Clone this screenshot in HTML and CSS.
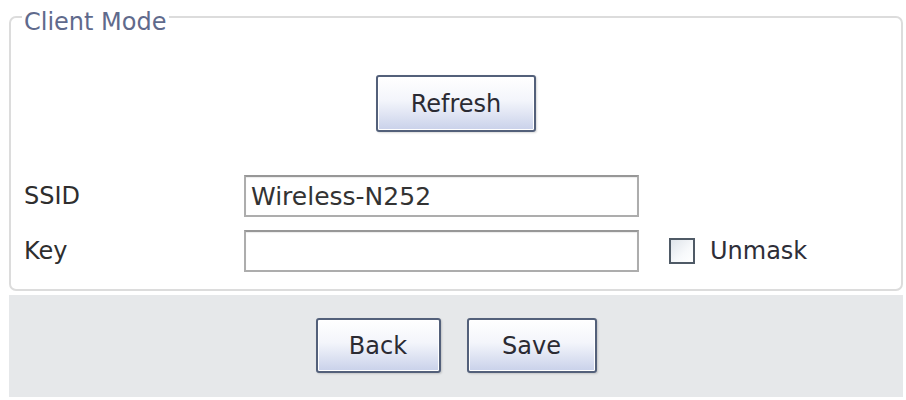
FILE: index.html
```html
<!DOCTYPE html>
<html>
<head>
<meta charset="utf-8">
<link rel="stylesheet" href="styles.css">
</head>
<body>
<div class="page">
  <fieldset class="panel">
    <legend class="panel-title">Client Mode</legend>
    <div class="refresh-row">
      <button class="btn btn-refresh" type="button">Refresh</button>
    </div>
    <div class="form-row">
      <label class="field-label">SSID</label>
      <input class="field-input" type="text" value="Wireless-N252">
      <span></span>
    </div>
    <div class="form-row">
      <label class="field-label">Key</label>
      <input class="field-input" type="password" value="">
      <label class="unmask"><span class="check"></span><span class="unmask-text">Unmask</span></label>
    </div>
  </fieldset>
  <div class="footer">
    <button class="btn btn-back" type="button">Back</button>
    <button class="btn btn-save" type="button">Save</button>
  </div>
</div>
</body>
</html>
```
FILE: styles.css
```css
html, body {
  margin: 0;
  padding: 0;
  background: #ffffff;
}
body {
  font-family: "DejaVu Sans", Verdana, sans-serif;
  color: #2e2e2e;
}
.page {
  padding: 0 3px 0 9px;
}
.panel {
  margin: 0;
  border: 2px solid #dcdcdc;
  border-radius: 7px;
  padding: 41px 13px 17px 13px;
  min-width: 0;
}
.panel-title {
  font-size: 24px;
  line-height: 24px;
  color: #5f6a8c;
  padding: 10px 2px 0 2px;
  margin-left: -2px;
}
.refresh-row {
  display: flex;
  justify-content: center;
  margin-bottom: 43px;
}
.btn {
  font-family: "DejaVu Sans", Verdana, sans-serif;
  font-size: 24px;
  color: #2b2b33;
  border: 2px solid #53607a;
  border-radius: 3px;
  background: linear-gradient(to bottom, #ffffff 0%, #f3f5fb 45%, #c9d1ea 100%);
  box-shadow: inset 0 0 0 1px #ffffff, 1px 1px 2px rgba(0,0,0,0.15);
  padding: 0;
  margin: 0;
}
.btn-refresh {
  width: 160px;
  height: 57px;
}
.form-row {
  display: grid;
  grid-template-columns: 220px 395px auto;
  align-items: center;
  margin-top: 13px;
}
.form-row:first-of-type {
  margin-top: 0;
}
.field-label {
  font-size: 24px;
  color: #2e2e2e;
}
.field-input {
  box-sizing: border-box;
  width: 395px;
  height: 42px;
  border: 2px solid #adadad;
  border-top-color: #979797;
  box-shadow: inset 0 1px 1px rgba(0,0,0,0.08);
  font-family: "DejaVu Sans", Verdana, sans-serif;
  font-size: 25px;
  color: #333333;
  padding: 0 5px;
  margin: 0;
  background: #ffffff;
}
.unmask {
  display: flex;
  align-items: center;
  margin-left: 30px;
  gap: 15px;
}
.check {
  box-sizing: border-box;
  width: 26px;
  height: 26px;
  border: 2px solid #4f5a66;
  background: linear-gradient(135deg, #dfe4ea 0%, #f7f9fb 60%, #ffffff 100%);
}
.unmask-text {
  font-size: 24px;
  color: #2e2e38;
}
.footer {
  margin-top: 4px;
  background: #e6e8ea;
  display: flex;
  justify-content: center;
  gap: 26px;
  padding: 23px 0 24px 0;
}
.btn-back {
  width: 125px;
  height: 55px;
}
.btn-save {
  width: 130px;
  height: 55px;
}
```
